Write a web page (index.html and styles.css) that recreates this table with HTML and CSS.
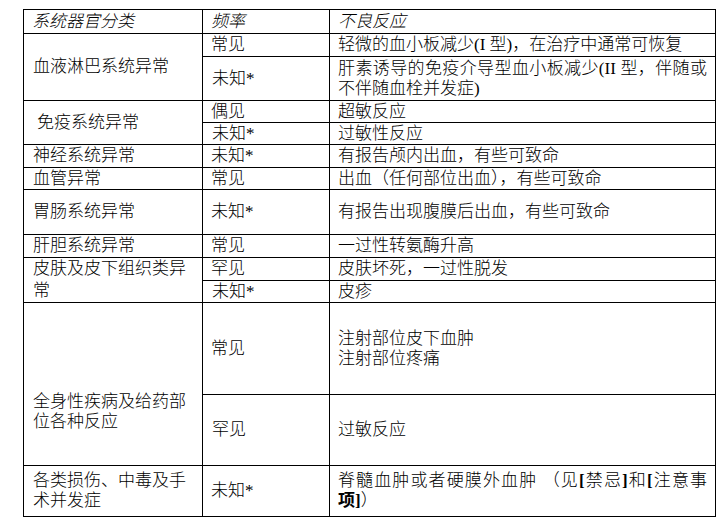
FILE: index.html
```html
<!DOCTYPE html>
<html lang="zh-CN">
<head>
<meta charset="utf-8">
<title>不良反应</title>
<link rel="stylesheet" href="styles.css">
</head>
<body>
<table class="ae">
  <colgroup>
    <col class="c1">
    <col class="c2">
    <col class="c3">
  </colgroup>
  <thead>
    <tr class="h24">
      <th>系统器官分类</th>
      <th>频率</th>
      <th>不良反应</th>
    </tr>
  </thead>
  <tbody>
    <tr class="h23">
      <td rowspan="2">血液淋巴系统异常</td>
      <td>常见</td>
      <td>轻微的血小板减少(I 型)，在治疗中通常可恢复</td>
    </tr>
    <tr class="h44">
      <td>未知*</td>
      <td><span class="jl">肝素诱导的免疫介导型血小板减少(II 型，伴随或</span>不伴随血栓并发症)</td>
    </tr>
    <tr class="h22">
      <td rowspan="2"><span class="indent">免疫系统异常</span></td>
      <td>偶见</td>
      <td>超敏反应</td>
    </tr>
    <tr class="h22">
      <td>未知*</td>
      <td>过敏性反应</td>
    </tr>
    <tr class="h23">
      <td>神经系统异常</td>
      <td>未知*</td>
      <td>有报告颅内出血，有些可致命</td>
    </tr>
    <tr class="h22">
      <td>血管异常</td>
      <td>常见</td>
      <td>出血（任何部位出血），有些可致命</td>
    </tr>
    <tr class="h45">
      <td>胃肠系统异常</td>
      <td>未知*</td>
      <td>有报告出现腹膜后出血，有些可致命</td>
    </tr>
    <tr class="h23">
      <td>肝胆系统异常</td>
      <td>常见</td>
      <td>一过性转氨酶升高</td>
    </tr>
    <tr class="h23">
      <td rowspan="2" class="loose">皮肤及皮下组织类异常</td>
      <td>罕见</td>
      <td>皮肤坏死，一过性脱发</td>
    </tr>
    <tr class="h22">
      <td>未知*</td>
      <td>皮疹</td>
    </tr>
    <tr class="h92">
      <td rowspan="2" class="low">全身性疾病及给药部位各种反应</td>
      <td>常见</td>
      <td>注射部位皮下血肿<br>注射部位疼痛</td>
    </tr>
    <tr class="h71">
      <td>罕见</td>
      <td>过敏反应</td>
    </tr>
    <tr class="h51">
      <td>各类损伤、中毒及手术并发症</td>
      <td>未知*</td>
      <td><span class="jl">脊髓血肿或者硬膜外血肿 （见<b>[</b>禁忌<b>]</b>和<b>[</b>注意事</span><b>项]</b>）</td>
    </tr>
  </tbody>
</table>
</body>
</html>
```

FILE: styles.css
```css
html, body {
  background: #ffffff;
}

body {
  margin: 9px 0 0 23px;
}

.ae {
  border-collapse: collapse;
  table-layout: fixed;
  width: 692px;
  font-family: "Liberation Serif", "Noto Sans CJK SC", serif;
  font-size: 17px;
  line-height: 20px;
  color: #000000;
}

.ae .c1 { width: 179px; }
.ae .c2 { width: 127px; }
.ae .c3 { width: 386px; }

.ae th,
.ae td {
  border: 1px solid #000000;
  padding: 0 8px;
  vertical-align: middle;
  text-align: left;
  font-weight: 300;
}

.ae th {
  font-style: italic;
}

.ae td:first-child {
  padding-left: 9px;
}

.ae b {
  font-weight: 700;
}

.indent {
  padding-left: 4px;
}

.loose {
  line-height: 22px;
}

.ae td.low {
  padding-top: 56px;
}

.jl {
  display: block;
  text-align: justify;
  text-align-last: justify;
}

.h22 { height: 22px; }
.h23 { height: 23px; }
.h24 { height: 24px; }
.h44 { height: 44px; }
.h45 { height: 45px; }
.h51 { height: 51px; }
.h71 { height: 71px; }
.h92 { height: 92px; }
```
